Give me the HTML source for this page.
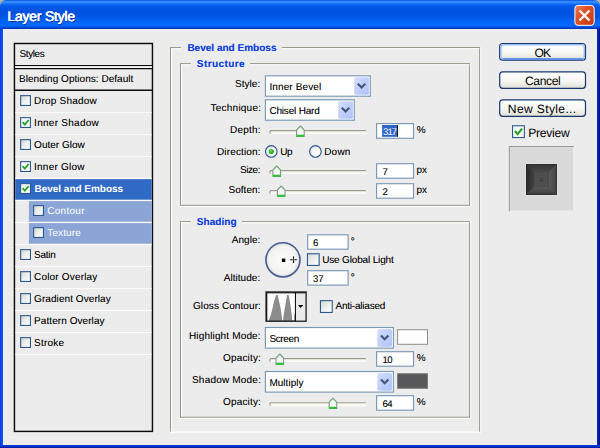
<!DOCTYPE html>
<html>
<head>
<meta charset="utf-8">
<title>Layer Style</title>
<style>
html,body{margin:0;padding:0;}
body{width:600px;height:448px;overflow:hidden;background:#ececec;}
#win{position:absolute;left:0;top:0;width:600px;height:448px;overflow:hidden;background:#ececec;font-family:"Liberation Sans",sans-serif;font-size:10px;color:#000;text-rendering:geometricPrecision;}
#art{position:absolute;left:0;top:0;display:block;}
.t{position:absolute;white-space:nowrap;line-height:12px;height:12px;text-shadow:0 0 0 rgba(0,0,0,0.3);}
</style>
</head>
<body>
<div id="win">
<svg id="art" width="600" height="448" viewBox="0 0 600 448">
<defs>
<linearGradient id="tg" x1="0" y1="0" x2="0" y2="29" gradientUnits="userSpaceOnUse"><stop offset="0" stop-color="#0846d8"/><stop offset="0.03" stop-color="#2478f6"/><stop offset="0.07" stop-color="#3c94ff"/><stop offset="0.115" stop-color="#2079f8"/><stop offset="0.17" stop-color="#0562ee"/><stop offset="0.26" stop-color="#0056e4"/><stop offset="0.45" stop-color="#0052e0"/><stop offset="0.62" stop-color="#005ae8"/><stop offset="0.75" stop-color="#0265fa"/><stop offset="0.88" stop-color="#0468ff"/><stop offset="0.93" stop-color="#0054e2"/><stop offset="0.975" stop-color="#003cc2"/><stop offset="1" stop-color="#0034b4"/></linearGradient>
<linearGradient id="lg" x1="0" y1="0" x2="3.2" y2="0" gradientUnits="userSpaceOnUse"><stop offset="0" stop-color="#0636d4"/><stop offset="0.5" stop-color="#1254f2"/><stop offset="1" stop-color="#0a48e2"/></linearGradient>
<linearGradient id="rgd" x1="596.8" y1="0" x2="600" y2="0" gradientUnits="userSpaceOnUse"><stop offset="0" stop-color="#0632d2"/><stop offset="0.45" stop-color="#0020b0"/><stop offset="1" stop-color="#000f8c"/></linearGradient>
<linearGradient id="bg2" x1="0" y1="444.8" x2="0" y2="448" gradientUnits="userSpaceOnUse"><stop offset="0" stop-color="#0a40e2"/><stop offset="0.45" stop-color="#0030c8"/><stop offset="1" stop-color="#001ca4"/></linearGradient>
<linearGradient id="cl" x1="0" y1="0" x2="1" y2="1"><stop offset="0" stop-color="#ee8463"/><stop offset="0.35" stop-color="#df5529"/><stop offset="1" stop-color="#c6370d"/></linearGradient>
<linearGradient id="cbg" x1="0" y1="0" x2="1" y2="1"><stop offset="0" stop-color="#d6d6d0"/><stop offset="0.5" stop-color="#eeeeeb"/><stop offset="1" stop-color="#ffffff"/></linearGradient>
<linearGradient id="btn" x1="0" y1="0" x2="0" y2="1"><stop offset="0" stop-color="#ffffff"/><stop offset="0.6" stop-color="#f5f5f1"/><stop offset="1" stop-color="#e0ded4"/></linearGradient>
<linearGradient id="cmb" x1="0" y1="0" x2="1" y2="1"><stop offset="0" stop-color="#d5dffe"/><stop offset="0.45" stop-color="#c1d1fb"/><stop offset="1" stop-color="#aec2f6"/></linearGradient>
<radialGradient id="rg" cx="0.62" cy="0.62" r="0.7"><stop offset="0" stop-color="#ffffff"/><stop offset="0.55" stop-color="#f6f6f3"/><stop offset="1" stop-color="#d4d4cd"/></radialGradient>
<radialGradient id="dg" cx="0.5" cy="0.5" r="0.5"><stop offset="0" stop-color="#fbfbfa"/><stop offset="0.8" stop-color="#f3f3f1"/><stop offset="1" stop-color="#dddddb"/></radialGradient>
<linearGradient id="bl1" x1="0" x2="1" y1="0" y2="0"><stop offset="0" stop-color="#292929"/><stop offset="1" stop-color="#404040"/></linearGradient>
<linearGradient id="br1" x1="0" x2="1" y1="0" y2="0"><stop offset="0" stop-color="#5a5a5a"/><stop offset="1" stop-color="#434343"/></linearGradient>
<linearGradient id="bb1" x1="0" x2="0" y1="0" y2="1"><stop offset="0" stop-color="#595959"/><stop offset="1" stop-color="#3a3a3a"/></linearGradient>
<linearGradient id="bt1" x1="0" x2="0" y1="0" y2="1"><stop offset="0" stop-color="#333333"/><stop offset="1" stop-color="#484848"/></linearGradient>
</defs>
<rect x="0" y="0" width="600" height="448" fill="#ececec"/>
<rect x="0" y="0" width="8" height="8" fill="#b7b5a9"/>
<rect x="592" y="0" width="8" height="8" fill="#b7b5a9"/>
<path d="M0 29V6Q0.3 0.3 6 0H594Q599.7 0.3 600 6V29Z" fill="url(#tg)"/>
<rect x="0" y="28.5" width="3.1" height="420" fill="url(#lg)"/>
<rect x="596.9" y="28.5" width="3.1" height="420" fill="url(#rgd)"/>
<rect x="0" y="444.9" width="600" height="3.1" fill="url(#bg2)"/>
<rect x="3.1" y="29" width="0.6" height="415.7" fill="#fdfdf6"/>
<rect x="596.3" y="29" width="0.6" height="415.7" fill="#fdfdf0"/>
<rect x="3.1" y="444.2" width="593.8" height="0.7" fill="#fdfdf0"/>
<rect x="574.9" y="5.4" width="19.3" height="19.9" fill="url(#cl)" rx="3" stroke="#fff" stroke-width="1"/>
<path d="M579.5 10.4L589.5 20.5M589.5 10.4L579.5 20.5" stroke="#fff" stroke-width="2.2" fill="none"/>
<rect x="14.45" y="43.5" width="138" height="387.9" fill="none" stroke="#0c0c0c" stroke-width="1.45"/>
<path d="M14.4 65.55L152.5 65.55" stroke="#0c0c0c" stroke-width="1.35" fill="none"/>
<path d="M14.4 68.6L152.5 68.6" stroke="#0c0c0c" stroke-width="1.35" fill="none"/>
<path d="M14.4 90.2L152.5 90.2" stroke="#0c0c0c" stroke-width="1.35" fill="none"/>
<rect x="15.2" y="66.25" width="136.6" height="1.65" fill="#f6f6f6"/>
<rect x="15.2" y="179.1" width="136.5" height="20.6" fill="#316ac5"/>
<rect x="28.9" y="201.1" width="122.8" height="20.6" fill="#8aa5d6"/>
<rect x="28.9" y="223.1" width="122.8" height="20.6" fill="#8aa5d6"/>
<rect x="15.2" y="112.05" width="136.5" height="1.1" fill="#fbfbfb"/>
<rect x="15.2" y="134.05" width="136.5" height="1.1" fill="#fbfbfb"/>
<rect x="15.2" y="156.05" width="136.5" height="1.1" fill="#fbfbfb"/>
<rect x="15.2" y="177.95" width="136.5" height="1.1" fill="#fbfbfb"/>
<rect x="15.2" y="199.95" width="136.5" height="1.1" fill="#fbfbfb"/>
<rect x="15.2" y="221.95" width="136.5" height="1.1" fill="#fbfbfb"/>
<rect x="15.2" y="243.95" width="136.5" height="1.1" fill="#fbfbfb"/>
<rect x="15.2" y="265.95" width="136.5" height="1.1" fill="#fbfbfb"/>
<rect x="15.2" y="287.95" width="136.5" height="1.1" fill="#fbfbfb"/>
<rect x="15.2" y="309.95" width="136.5" height="1.1" fill="#fbfbfb"/>
<rect x="15.2" y="331.95" width="136.5" height="1.1" fill="#fbfbfb"/>
<rect x="15.2" y="353.95" width="136.5" height="1.1" fill="#fbfbfb"/>
<rect x="20.65" y="95.65" width="9.8" height="9.8" fill="url(#cbg)" stroke="#2a5a8f" stroke-width="1.1"/>
<rect x="20.65" y="117.65" width="9.8" height="9.8" fill="#fbfbfa" stroke="#2a5a8f" stroke-width="1.1"/><g transform="translate(20.1 117.1) scale(0.948)"><path d="M2.6 5.2L5 7.9L9 3.1" stroke="#22a322" stroke-width="1.9" fill="none"/></g>
<rect x="20.65" y="139.65" width="9.8" height="9.8" fill="url(#cbg)" stroke="#2a5a8f" stroke-width="1.1"/>
<rect x="20.65" y="161.65" width="9.8" height="9.8" fill="#fbfbfa" stroke="#2a5a8f" stroke-width="1.1"/><g transform="translate(20.1 161.1) scale(0.948)"><path d="M2.6 5.2L5 7.9L9 3.1" stroke="#22a322" stroke-width="1.9" fill="none"/></g>
<rect x="20.65" y="183.65" width="9.8" height="9.8" fill="#fbfbfa" stroke="#2a5a8f" stroke-width="1.1"/><g transform="translate(20.1 183.1) scale(0.948)"><path d="M2.6 5.2L5 7.9L9 3.1" stroke="#22a322" stroke-width="1.9" fill="none"/></g>
<rect x="33.65" y="205.65" width="9.8" height="9.8" fill="url(#cbg)" stroke="#2a5a8f" stroke-width="1.1"/>
<rect x="33.65" y="227.65" width="9.8" height="9.8" fill="url(#cbg)" stroke="#2a5a8f" stroke-width="1.1"/>
<rect x="20.65" y="249.65" width="9.8" height="9.8" fill="url(#cbg)" stroke="#2a5a8f" stroke-width="1.1"/>
<rect x="20.65" y="271.65" width="9.8" height="9.8" fill="url(#cbg)" stroke="#2a5a8f" stroke-width="1.1"/>
<rect x="20.65" y="293.65" width="9.8" height="9.8" fill="url(#cbg)" stroke="#2a5a8f" stroke-width="1.1"/>
<rect x="20.65" y="315.65" width="9.8" height="9.8" fill="url(#cbg)" stroke="#2a5a8f" stroke-width="1.1"/>
<rect x="20.65" y="337.65" width="9.8" height="9.8" fill="url(#cbg)" stroke="#2a5a8f" stroke-width="1.1"/>
<path d="M281.6 48.55H478.6M171.5 48.55H181M171.5 48.05V430.7M480.6 47.05V432.7M170 432.2H481.1" stroke="#ffffff" stroke-width="1.25" fill="none"/><path d="M281.6 47.55H480.1M170 47.55H181M170.5 47.55V431.6M479.6 48.55V431.6" stroke="#99978a" stroke-width="1" fill="none"/>
<path d="M250 64.6H468.6M181.5 64.6H190.8M181.5 64.1V204.8M470.6 63.1V206.8M180 206.3H471.1" stroke="#ffffff" stroke-width="1.25" fill="none"/><path d="M250 63.6H470.1M180 63.6H190.8M180.5 63.6V205.7M469.6 64.6V205.7M180 205.3H470.1" stroke="#99978a" stroke-width="1" fill="none"/>
<path d="M242 222.6H468.6M181.5 222.6H190.8M181.5 222.1V416.7M470.6 221.1V418.7M180 418.2H471.1" stroke="#ffffff" stroke-width="1.25" fill="none"/><path d="M242 221.6H470.1M180 221.6H190.8M180.5 221.6V417.6M469.6 222.6V417.6M180 417.2H470.1" stroke="#99978a" stroke-width="1" fill="none"/>
<rect x="265.4" y="75.8" width="104.9" height="20.4" fill="#fff" stroke="#7a98b6" stroke-width="1.15"/><rect x="354.2" y="77.2" width="14.7" height="17.6" fill="url(#cmb)" rx="1.6"/><g transform="translate(361.55 85.85)"><path d="M-3.7 -2.1L0 1.6L3.7 -2.1" stroke="#43567d" stroke-width="2.2" fill="none"/></g>
<rect x="265.4" y="99.8" width="88.9" height="20.4" fill="#fff" stroke="#7a98b6" stroke-width="1.15"/><rect x="338.2" y="101.2" width="14.7" height="17.6" fill="url(#cmb)" rx="1.6"/><g transform="translate(345.55 109.85)"><path d="M-3.7 -2.1L0 1.6L3.7 -2.1" stroke="#43567d" stroke-width="2.2" fill="none"/></g>
<rect x="265.4" y="327.5" width="128" height="20.6" fill="#fff" stroke="#7a98b6" stroke-width="1.15"/><rect x="377.3" y="328.9" width="14.7" height="17.8" fill="url(#cmb)" rx="1.6"/><g transform="translate(384.65 337.65)"><path d="M-3.7 -2.1L0 1.6L3.7 -2.1" stroke="#43567d" stroke-width="2.2" fill="none"/></g>
<rect x="265.4" y="371.5" width="128" height="20.6" fill="#fff" stroke="#7a98b6" stroke-width="1.15"/><rect x="377.3" y="372.9" width="14.7" height="17.8" fill="url(#cmb)" rx="1.6"/><g transform="translate(384.65 381.65)"><path d="M-3.7 -2.1L0 1.6L3.7 -2.1" stroke="#43567d" stroke-width="2.2" fill="none"/></g>
<rect x="376.6" y="123.6" width="36.9" height="14.7" fill="#fff" stroke="#7a98b6" stroke-width="1.15"/>
<rect x="382.1" y="125" width="15" height="11.8" fill="#2f66c6"/>
<rect x="397.1" y="125" width="0.9" height="11.8" fill="#000"/>
<rect x="376.6" y="163.7" width="36.9" height="14.5" fill="#fff" stroke="#7a98b6" stroke-width="1.15"/>
<rect x="376.6" y="183.7" width="36.9" height="14.5" fill="#fff" stroke="#7a98b6" stroke-width="1.15"/>
<rect x="307.7" y="234.8" width="40.4" height="14.4" fill="#fff" stroke="#7a98b6" stroke-width="1.15"/>
<rect x="307.7" y="270.7" width="40.4" height="14.4" fill="#fff" stroke="#7a98b6" stroke-width="1.15"/>
<rect x="376.6" y="351.7" width="36.9" height="14.5" fill="#fff" stroke="#7a98b6" stroke-width="1.15"/>
<rect x="376.6" y="395.7" width="36.9" height="14.5" fill="#fff" stroke="#7a98b6" stroke-width="1.15"/>
<rect x="269.3" y="130.1" width="97.2" height="3.7" fill="#f7f7f1" rx="1.8"/><path d="M270.3 133.6Q269.3 132.1 270.5 130.6H366" stroke="#9d9c8f" stroke-width="1.1" fill="none"/><path d="M270.8 133.65H366" stroke="#fff" stroke-width="0.7" fill="none"/><g transform="translate(296.1 125.4)"><path d="M0.5 4.6L4.3 0.6L8.1 4.6V11H0.5Z" fill="#f7f7f3" stroke="#85988c" stroke-width="1.1" stroke-linejoin="round"/><path d="M0.9 4.6L4.3 1L7.7 4.6" fill="none" stroke="#6fc47c" stroke-width="0.8"/><path d="M0.6 9.3H8V11.4H0.6Z" fill="#2cc238"/></g>
<rect x="269.3" y="170.1" width="97.2" height="3.7" fill="#f7f7f1" rx="1.8"/><path d="M270.3 173.6Q269.3 172.1 270.5 170.6H366" stroke="#9d9c8f" stroke-width="1.1" fill="none"/><path d="M270.8 173.65H366" stroke="#fff" stroke-width="0.7" fill="none"/><g transform="translate(272.4 165.4)"><path d="M0.5 4.6L4.3 0.6L8.1 4.6V11H0.5Z" fill="#f7f7f3" stroke="#85988c" stroke-width="1.1" stroke-linejoin="round"/><path d="M0.9 4.6L4.3 1L7.7 4.6" fill="none" stroke="#6fc47c" stroke-width="0.8"/><path d="M0.6 9.3H8V11.4H0.6Z" fill="#2cc238"/></g>
<rect x="269.3" y="190.1" width="97.2" height="3.7" fill="#f7f7f1" rx="1.8"/><path d="M270.3 193.6Q269.3 192.1 270.5 190.6H366" stroke="#9d9c8f" stroke-width="1.1" fill="none"/><path d="M270.8 193.65H366" stroke="#fff" stroke-width="0.7" fill="none"/><g transform="translate(276.9 185.4)"><path d="M0.5 4.6L4.3 0.6L8.1 4.6V11H0.5Z" fill="#f7f7f3" stroke="#85988c" stroke-width="1.1" stroke-linejoin="round"/><path d="M0.9 4.6L4.3 1L7.7 4.6" fill="none" stroke="#6fc47c" stroke-width="0.8"/><path d="M0.6 9.3H8V11.4H0.6Z" fill="#2cc238"/></g>
<rect x="269.3" y="358.1" width="97.2" height="3.7" fill="#f7f7f1" rx="1.8"/><path d="M270.3 361.6Q269.3 360.1 270.5 358.6H366" stroke="#9d9c8f" stroke-width="1.1" fill="none"/><path d="M270.8 361.65H366" stroke="#fff" stroke-width="0.7" fill="none"/><g transform="translate(275.5 353.4)"><path d="M0.5 4.6L4.3 0.6L8.1 4.6V11H0.5Z" fill="#f7f7f3" stroke="#85988c" stroke-width="1.1" stroke-linejoin="round"/><path d="M0.9 4.6L4.3 1L7.7 4.6" fill="none" stroke="#6fc47c" stroke-width="0.8"/><path d="M0.6 9.3H8V11.4H0.6Z" fill="#2cc238"/></g>
<rect x="269.3" y="402.2" width="97.2" height="3.7" fill="#f7f7f1" rx="1.8"/><path d="M270.3 405.7Q269.3 404.2 270.5 402.7H366" stroke="#9d9c8f" stroke-width="1.1" fill="none"/><path d="M270.8 405.75H366" stroke="#fff" stroke-width="0.7" fill="none"/><g transform="translate(328.65 397.5)"><path d="M0.5 4.6L4.3 0.6L8.1 4.6V11H0.5Z" fill="#f7f7f3" stroke="#85988c" stroke-width="1.1" stroke-linejoin="round"/><path d="M0.9 4.6L4.3 1L7.7 4.6" fill="none" stroke="#6fc47c" stroke-width="0.8"/><path d="M0.6 9.3H8V11.4H0.6Z" fill="#2cc238"/></g>
<circle cx="271.3" cy="151.4" r="5.8" fill="url(#rg)" stroke="#2d5a94" stroke-width="1.15"/><circle cx="271.3" cy="151.5" r="2.6" fill="#31b231"/><circle cx="270.9" cy="151" r="1.2" fill="#62d462"/>
<circle cx="315.4" cy="151.4" r="5.8" fill="url(#rg)" stroke="#2d5a94" stroke-width="1.15"/>
<circle cx="282.95" cy="259.8" r="17.05" fill="url(#dg)" stroke="#4a5c94" stroke-width="1.65"/>
<rect x="281.9" y="258.6" width="3.4" height="3.4" fill="#000"/>
<path d="M290.2 259.75H292.6M294.4 259.75H296.8M293.5 256.4V258.8M293.5 260.6V263" stroke="#000" stroke-width="1.1" fill="none"/><rect x="293" y="259.2" width="1.1" height="1.1" fill="#000"/>
<rect x="307.45" y="253.75" width="11.7" height="11.7" fill="url(#cbg)" stroke="#2a5a8f" stroke-width="1.1"/>
<rect x="266.6" y="292.4" width="39.4" height="28.8" fill="#e9e9e9"/>
<rect x="266.6" y="292.4" width="28.6" height="28.8" fill="#fefefe"/>
<path d="M268.3 321.2L268.8 320.2L270.4 316.1L271.8 311.3L272.9 306.5L274.1 300.9L276.1 295.1H277.7L279 300.9L280.3 306.5L281.1 311.3L281.7 316.1L282.1 320.2L282.6 320.6L283.1 320.2L283.5 316.1L284.1 312.1L285.1 306.5L286.1 300.9L287.1 295.1H288.7L289.7 300.9L290.7 306.5L291.3 312.1L291.9 316.1L292.1 320.2L293.2 320L294.2 320.2L294.3 313.7H295.1V321.2Z" fill="#8c8c8c"/>
<path d="M295.45 292.4L295.45 321.2" stroke="#0c0c0c" stroke-width="1.05" fill="none"/>
<rect x="266.1" y="291.9" width="40" height="29.3" fill="none" stroke="#000" stroke-width="1.15"/>
<path d="M265.55 321.6V291.5H306.4" stroke="#6c6c6c" stroke-width="0.6" fill="none"/>
<path d="M266.8 321V292.8H305.6" stroke="#000" stroke-width="1" fill="none"/>
<path d="M298 304.9H303.3L300.65 308.1Z" fill="#000"/>
<rect x="320.45" y="300.65" width="11.8" height="11.8" fill="url(#cbg)" stroke="#2a5a8f" stroke-width="1.1"/>
<rect x="397.6" y="329.7" width="29.9" height="14.6" fill="#ffffff" stroke="#8c8c8c" stroke-width="1"/>
<rect x="397.6" y="373.7" width="29.9" height="14.6" fill="#58585a" stroke="#7c7c7c" stroke-width="1"/>
<rect x="499.7" y="43.5" width="85.8" height="16.7" fill="url(#btn)" rx="3" stroke="#17376d" stroke-width="1.2"/><rect x="500.9" y="44.7" width="83.4" height="14.3" fill="none" rx="2.2" stroke="#9dbcf4" stroke-width="1.5"/><path d="M502.5 59H582.7" stroke="#4f7fe0" stroke-width="1.4" fill="none"/>
<rect x="499.7" y="71.9" width="85.8" height="16.4" fill="url(#btn)" rx="3" stroke="#17376d" stroke-width="1.2"/>
<rect x="499.7" y="99.9" width="85.8" height="16.4" fill="url(#btn)" rx="3" stroke="#17376d" stroke-width="1.2"/>
<rect x="512.55" y="125.75" width="11.8" height="11.8" fill="#fbfbfa" stroke="#2a5a8f" stroke-width="1.1"/><g transform="translate(512 125.2) scale(1.122)"><path d="M2.6 5.2L5 7.9L9 3.1" stroke="#22a322" stroke-width="1.9" fill="none"/></g>
<rect x="509.3" y="146" width="64.6" height="65.2" fill="#d9d9d9"/>
<path d="M509.3 211.2V146.5H573.9" stroke="#999" stroke-width="1" fill="none"/>
<path d="M573.6 147V210.9H509.8" stroke="#f2f2f2" stroke-width="0.8" fill="none"/>
<rect x="525.5" y="163.5" width="31.9" height="31.9" fill="none" stroke="#e0e0e0" stroke-width="1"/>
<g transform="translate(526 164)"><rect width="30.9" height="30.9" fill="#4b4b4b"/><path d="M0 0H30.9L22.9 8H8Z" fill="url(#bt1)"/><path d="M0 0L8 8V22.9L0 30.9Z" fill="url(#bl1)"/><path d="M30.9 0V30.9L22.9 22.9V8Z" fill="url(#br1)"/><path d="M0 30.9L8 22.9H22.9L30.9 30.9Z" fill="url(#bb1)"/><rect x="0.4" y="0.4" width="30.1" height="30.1" fill="none" stroke="#2a2a2a" stroke-width="0.8" opacity="0.8"/><rect x="8" y="8" width="14.9" height="14.9" fill="#4a4a4a"/><rect x="9.9" y="9.9" width="11.1" height="11.1" fill="none" stroke="#565656" stroke-width="0.9"/><rect x="12.2" y="12.2" width="6.5" height="6.5" fill="none" stroke="#545454" stroke-width="0.9"/><rect x="14.1" y="14.1" width="2.7" height="2.7" fill="#444"/></g>
</svg>
  <div class="t" style="left:7.2px;top:10px;font-size:14px;color:#fff;letter-spacing:-0.23px;text-shadow:0.45px 0 0 #fff,0 0 0 #fff,1px 1px 0 #0b2f9a;">Layer Style</div>
  <div class="t" style="left:19.6px;top:49px;letter-spacing:-0.41px;">Styles</div>
  <div class="t" style="left:19px;top:74px;letter-spacing:0.04px;">Blending Options: Default</div>
  <div class="t" style="left:34.1px;top:96px;letter-spacing:0.2px;">Drop Shadow</div>
  <div class="t" style="left:34.1px;top:118px;letter-spacing:0.27px;">Inner Shadow</div>
  <div class="t" style="left:34.1px;top:140px;letter-spacing:0.01px;">Outer Glow</div>
  <div class="t" style="left:34.1px;top:162px;letter-spacing:0.22px;">Inner Glow</div>
  <div class="t" style="left:34.1px;top:250px;letter-spacing:-0.25px;">Satin</div>
  <div class="t" style="left:34.1px;top:272px;letter-spacing:0.17px;">Color Overlay</div>
  <div class="t" style="left:34.1px;top:294px;letter-spacing:0.07px;">Gradient Overlay</div>
  <div class="t" style="left:34.1px;top:316px;letter-spacing:0.07px;">Pattern Overlay</div>
  <div class="t" style="left:34.1px;top:338px;letter-spacing:0.21px;">Stroke</div>
  <div class="t" style="left:34.5px;top:184px;font-weight:bold;color:#fff;text-shadow:none;letter-spacing:-0.02px;">Bevel and Emboss</div>
  <div class="t" style="left:47.3px;top:206px;color:#fff;text-shadow:none;letter-spacing:0.27px;">Contour</div>
  <div class="t" style="left:47.3px;top:228px;color:#fff;text-shadow:none;letter-spacing:0.1px;">Texture</div>
  <div class="t" style="left:187.4px;top:43px;font-weight:bold;color:#0c40de;letter-spacing:0.01px;text-shadow:0 0 0 rgba(12,64,222,0.45);">Bevel and Emboss</div>
  <div class="t" style="left:196.8px;top:59px;font-weight:bold;color:#0c40de;letter-spacing:0.42px;text-shadow:0 0 0 rgba(12,64,222,0.45);">Structure</div>
  <div class="t" style="left:196.8px;top:217px;font-weight:bold;color:#0c40de;letter-spacing:0.06px;text-shadow:0 0 0 rgba(12,64,222,0.45);">Shading</div>
  <div class="t" style="left:235px;top:79px;letter-spacing:0.05px;">Style:</div>
  <div class="t" style="left:210.6px;top:103px;letter-spacing:0.22px;">Technique:</div>
  <div class="t" style="left:230px;top:125px;letter-spacing:0.23px;">Depth:</div>
  <div class="t" style="left:217px;top:147px;letter-spacing:0.14px;">Direction:</div>
  <div class="t" style="left:240px;top:165px;letter-spacing:-0.45px;">Size:</div>
  <div class="t" style="left:228.5px;top:185px;letter-spacing:0.03px;">Soften:</div>
  <div class="t" style="left:231.8px;top:235px;letter-spacing:0.03px;">Angle:</div>
  <div class="t" style="left:223.8px;top:273px;letter-spacing:0.03px;">Altitude:</div>
  <div class="t" style="left:193px;top:301px;letter-spacing:0.09px;">Gloss Contour:</div>
  <div class="t" style="left:189px;top:331px;letter-spacing:0.15px;">Highlight Mode:</div>
  <div class="t" style="left:223px;top:353px;letter-spacing:0.17px;">Opacity:</div>
  <div class="t" style="left:192px;top:375px;letter-spacing:0.2px;">Shadow Mode:</div>
  <div class="t" style="left:223px;top:397px;letter-spacing:0.17px;">Opacity:</div>
  <div class="t" style="left:269.4px;top:82px;letter-spacing:0.12px;">Inner Bevel</div>
  <div class="t" style="left:269.4px;top:106px;letter-spacing:-0.18px;">Chisel Hard</div>
  <div class="t" style="left:269.4px;top:334px;letter-spacing:-0.35px;">Screen</div>
  <div class="t" style="left:269.4px;top:378px;letter-spacing:0.03px;">Multiply</div>
  <div class="t" style="left:280.2px;top:147px;letter-spacing:-0.37px;">Up</div>
  <div class="t" style="left:324.2px;top:147px;letter-spacing:0.21px;">Down</div>
  <div class="t" style="left:322.2px;top:255px;letter-spacing:-0.16px;">Use Global Light</div>
  <div class="t" style="left:335.5px;top:301px;letter-spacing:-0.22px;">Anti-aliased</div>
  <div class="t" style="left:383.1px;top:127px;font-size:9.6px;color:#fff;text-shadow:none;letter-spacing:-1px;">317</div>
  <div class="t" style="left:382.4px;top:167px;font-size:9.6px;">7</div>
  <div class="t" style="left:382.4px;top:187px;font-size:9.6px;">2</div>
  <div class="t" style="left:313px;top:238px;font-size:9.6px;">6</div>
  <div class="t" style="left:313px;top:274px;font-size:9.6px;letter-spacing:-0.16px;">37</div>
  <div class="t" style="left:382.4px;top:355px;font-size:9.6px;letter-spacing:-0.6px;">10</div>
  <div class="t" style="left:382.4px;top:399px;font-size:9.6px;letter-spacing:-0.6px;">64</div>
  <div class="t" style="left:416.8px;top:125px;">%</div>
  <div class="t" style="left:416.6px;top:165px;letter-spacing:-0.16px;">px</div>
  <div class="t" style="left:416.6px;top:185px;letter-spacing:-0.16px;">px</div>
  <div class="t" style="left:416.8px;top:353px;">%</div>
  <div class="t" style="left:416.8px;top:397px;">%</div>
  <div class="t" style="left:350.6px;top:236px;font-size:11px;">°</div>
  <div class="t" style="left:350.6px;top:272px;font-size:11px;">°</div>
  <div class="t" style="left:534.4px;top:47px;font-size:12.1px;letter-spacing:-0.75px;text-shadow:none;">OK</div>
  <div class="t" style="left:525px;top:75px;font-size:12.1px;letter-spacing:-0.37px;text-shadow:none;">Cancel</div>
  <div class="t" style="left:507.8px;top:103px;font-size:12.1px;letter-spacing:0.35px;text-shadow:none;">New Style...</div>
  <div class="t" style="left:528.2px;top:127px;font-size:12.1px;letter-spacing:-0.26px;text-shadow:none;">Preview</div>
</div>
</body>
</html>
